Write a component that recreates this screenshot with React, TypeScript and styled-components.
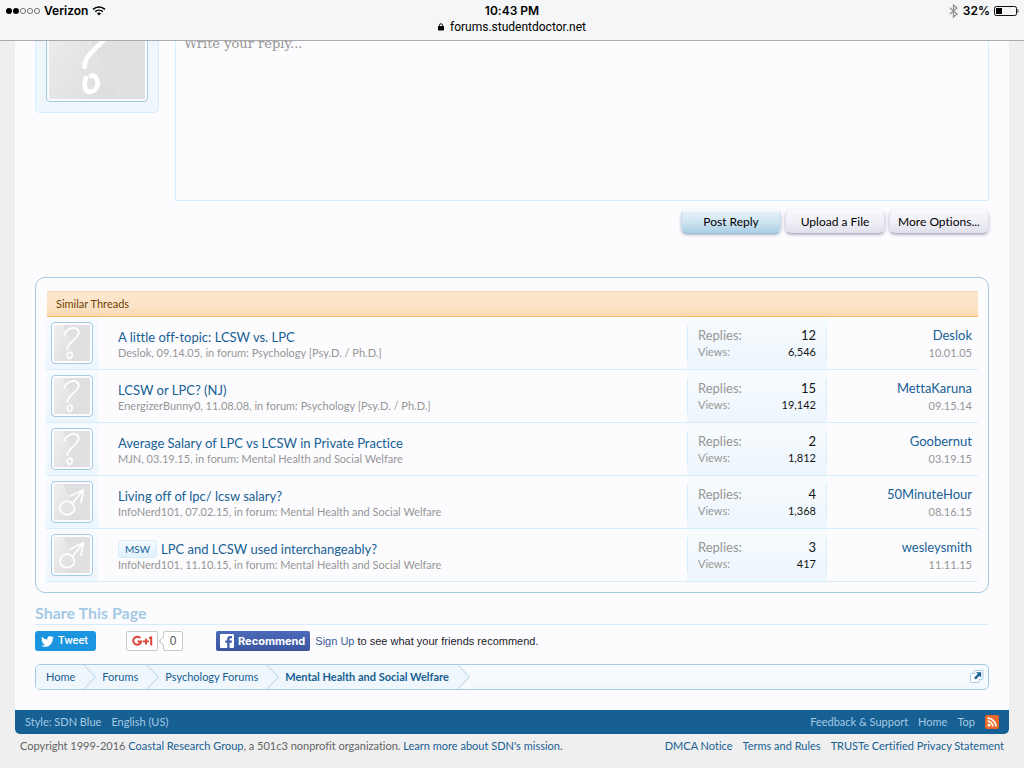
import React from 'react';
import styled, { createGlobalStyle } from 'styled-components';

const GlobalStyle = createGlobalStyle`
  *, *::before, *::after { box-sizing: border-box; }
  body {
    margin: 0;
    background: #efefef;
    font-family: Lato, "Open Sans", sans-serif;
    font-size: 11px;
    line-height: 16px;
    font-variant-ligatures: none;
    color: #141414;
  }
  a { color: #176093; text-decoration: none; }
  button, textarea { font: inherit; color: inherit; }
`;

/* ---------- browser status bar ---------- */

const StatusBar = styled.header`
  position: fixed;
  inset: 0 0 auto 0;
  z-index: 10;
  height: 41px;
  display: grid;
  grid-template-columns: 1fr auto 1fr;
  background: #f5f6f7;
  border-bottom: 1px solid #a9aaab;
  color: #000;
  font-family: Inter, Roboto, sans-serif;
  font-size: 12px;
  line-height: 16px;
  padding: 3px 5px;
`;

const StatusSide = styled.div<{ $end?: boolean }>`
  display: flex;
  height: 16px;
  align-items: center;
  justify-content: ${(p) => (p.$end ? 'flex-end' : 'flex-start')};
  gap: 4px;
  font-weight: 600;
`;

const StatusCenter = styled.div`
  display: flex;
  flex-direction: column;
  align-items: center;
  strong { font-weight: 600; }
`;

const Address = styled.span`
  display: flex;
  align-items: center;
  gap: 6px;
  font-family: Roboto, sans-serif;
`;

/* ---------- page ---------- */

const Content = styled.main`
  margin: 0 15px;
  padding: 0 20px 20px;
  background: #fcfcff;
`;

const ReplyArea = styled.form`
  display: flex;
  gap: 16px;
`;

const AvatarPanel = styled.div`
  align-self: flex-start;
  padding: 0 10px 10px;
  background: #f0f7fc;
  border: 1px solid #d7edfc;
  border-top: 0;
  border-radius: 0 0 5px 5px;
`;

const AvatarFrame = styled.span<{ $size: number }>`
  display: block;
  width: ${(p) => p.$size}px;
  height: ${(p) => p.$size}px;
  padding: 2px;
  background: #fcfcff;
  border: 1px solid #a5cae4;
  border-radius: 4px;
  svg { display: block; width: 100%; height: 100%; }
`;

const ReplyColumn = styled.div`
  flex: 1;
  display: flex;
  flex-direction: column;
`;

const ReplyBox = styled.textarea`
  display: block;
  width: 100%;
  height: 201px;
  padding: 34px 8px 8px;
  resize: none;
  outline: 0;
  background: #fcfcff;
  border: 1px solid #d7edfc;
  border-radius: 0;
  font-family: "DejaVu Serif", serif;
  font-size: 13px;
  line-height: 18px;
  &::placeholder { color: #969696; opacity: 1; }
`;

const ButtonRow = styled.div`
  display: flex;
  justify-content: flex-end;
  gap: 4px;
  padding-top: 9px;
`;

const Button = styled.button<{ $primary?: boolean }>`
  width: 100px;
  height: 24px;
  padding: 0;
  white-space: nowrap;
  font-size: 12px;
  line-height: 22px;
  color: #000;
  border: 1px solid ${(p) => (p.$primary ? '#c5dcec' : '#dfdfec')};
  border-top-color: #fff;
  border-bottom-color: ${(p) => (p.$primary ? '#9dbdd3' : '#b9b9c8')};
  border-radius: 6px;
  background: ${(p) =>
    p.$primary
      ? 'linear-gradient(#e8f3fa, #cfe4f1 50%, #a9cfe6)'
      : 'linear-gradient(#f8f8fc, #efeff6 50%, #e0e0ec)'};
  box-shadow: 0 1px 3px rgba(90, 90, 120, 0.45);
`;

/* ---------- similar threads ---------- */

const ThreadsBox = styled.section`
  margin-top: 43px;
  padding: 13px 10px 10px;
  border: 1px solid #a5cae4;
  border-radius: 10px;
`;

const ThreadsHeading = styled.h2`
  margin: 0 0 0 1px;
  height: 26px;
  padding: 0 9px;
  font-size: 11px;
  font-weight: 400;
  line-height: 24px;
  color: #6d3f03;
  background: linear-gradient(#fce8cf, #fbe3c6 60%, #f9d9b0);
  border-top: 1px solid #f9d9b0;
  border-bottom: 1px solid #f9bc6d;
`;

const ThreadTable = styled.table`
  width: 100%;
  border-collapse: separate;
  border-spacing: 0;
  table-layout: fixed;
`;

const ThreadRow = styled.tr`
  td {
    height: 53px;
    padding: 0;
    border-bottom: 1px solid #d7edfc;
  }
`;

const AvatarCell = styled.td`
  background: linear-gradient(#f7fbfd, #edf6fd);
  ${AvatarFrame} { margin-left: 5px; }
`;

const TitleCell = styled.td`
  && { padding-left: 20px; }
`;

const ThreadTitle = styled.h3`
  display: flex;
  align-items: center;
  gap: 4px;
  margin: 0;
  height: 19px;
  font-size: 13px;
  font-weight: 400;
  line-height: 19px;
  white-space: nowrap;
`;

const Prefix = styled.span`
  padding: 0 6px;
  font-size: 10px;
  line-height: 16px;
  color: #176093;
  background: linear-gradient(#f5fbfe, #e2f1fb);
  border: 1px solid #d7edfc;
  border-radius: 3px;
`;

const Meta = styled.p`
  margin: 0;
  line-height: 12px;
  color: #969696;
  white-space: nowrap;
`;

const StatsCell = styled.td`
  background: linear-gradient(#f7fbfd, #edf6fd);
`;

const Stats = styled.dl`
  margin: 0;
  padding: 1px 10px;
  border: solid #d7edfc;
  border-width: 0 1px;
`;

const Stat = styled.div<{ $major?: boolean }>`
  display: flex;
  justify-content: space-between;
  font-size: ${(p) => (p.$major ? '13px' : '11px')};
  line-height: ${(p) => (p.$major ? '17px' : '15px')};
  dt { color: #969696; }
  dd { margin: 0; color: #141414; }
`;

const LastCell = styled.td`
  text-align: right;
  && { padding: 2px 6px 0 0; }
  a { display: block; font-size: 13px; line-height: 17px; }
  time { display: block; line-height: 17px; color: #969696; }
`;

/* ---------- share ---------- */

const ShareHeading = styled.h2`
  margin: 10px 0 0;
  padding-bottom: 1px;
  font-size: 16px;
  font-weight: 700;
  line-height: 20px;
  color: #a5cae4;
  border-bottom: 1px solid #d7edfc;
`;

const ShareRow = styled.div`
  display: flex;
  align-items: center;
  height: 20px;
  margin-top: 6px;
  font-family: "Liberation Sans", Arial, sans-serif;
`;

const TweetButton = styled.button`
  display: flex;
  align-items: center;
  gap: 4px;
  height: 20px;
  padding: 0 8px 0 6px;
  border: 0;
  border-radius: 3px;
  background: #1b95e0;
  color: #fff;
  font-size: 11px;
  font-weight: 500;
  font-family: Roboto, sans-serif;
`;

const PlusOne = styled.button`
  margin-left: 30px;
  width: 32px;
  height: 20px;
  padding: 0;
  display: grid;
  place-items: center;
  background: #fff;
  border: 1px solid #c9c9c9;
  border-radius: 2px;
`;

const CountBubble = styled.span`
  position: relative;
  margin-left: 5px;
  width: 20px;
  height: 20px;
  background: #fff;
  border: 1px solid #c9c9c9;
  border-radius: 2px;
  text-align: center;
  font-size: 12px;
  line-height: 18px;
  color: #555;
  &::before {
    content: "";
    position: absolute;
    left: -4px;
    top: 6px;
    width: 6px;
    height: 6px;
    background: #fff;
    border: solid #c9c9c9;
    border-width: 0 0 1px 1px;
    transform: rotate(45deg);
  }
`;

const RecommendButton = styled.button`
  display: flex;
  align-items: center;
  gap: 4px;
  height: 20px;
  margin: 0 5px 0 33px;
  padding: 0 5px 0 4px;
  border: 0;
  border-radius: 2px;
  background: linear-gradient(#4c69ba, #3b55a0);
  color: #fff;
  font-size: 11px;
  font-weight: 700;
  font-family: Inter, Roboto, sans-serif;
`;

const ShareNote = styled.p`
  margin: 0;
  white-space: nowrap;
  color: #1d2129;
  a { color: #3b5998; }
`;

/* ---------- breadcrumb ---------- */

const Breadcrumb = styled.nav`
  display: flex;
  align-items: center;
  height: 26px;
  margin-top: 13px;
  border: 1px solid #a5cae4;
  border-radius: 5px;
  overflow: hidden;
  background: linear-gradient(#f7fbfe, #f7fbfe 50%, #f0f7fc);
`;

const Crumb = styled.span<{ $current?: boolean; $first?: boolean }>`
  display: flex;
  height: 24px;
  background: #f0f7fc;
  a {
    padding: 0 9px 0 ${(p) => (p.$first ? '10px' : '6px')};
    line-height: 24px;
    white-space: nowrap;
    font-weight: ${(p) => (p.$current ? 700 : 400)};
  }
  svg { display: block; background: ${(p) => (p.$current ? '#f7fbfe' : '#f0f7fc')}; }
`;

const JumpButton = styled.button`
  margin-left: auto;
  margin-right: 3px;
  padding: 0;
  width: 15px;
  height: 14px;
  border: 0;
  background: none;
  svg { display: block; }
`;

/* ---------- footer ---------- */

const FooterBar = styled.nav`
  display: flex;
  justify-content: space-between;
  align-items: center;
  height: 24px;
  margin: 0 15px;
  padding: 0 10px;
  background: #176093;
  border-radius: 0 0 5px 5px;
  a { color: #a5cae4; }
`;

const LinkGroup = styled.div`
  display: flex;
  align-items: center;
  gap: 10px;
  white-space: nowrap;
  svg { display: block; }
`;

const Legal = styled.footer`
  display: flex;
  justify-content: space-between;
  padding: 4px 20px;
  color: #646464;
  white-space: nowrap;
  p { margin: 0; }
`;

/* ---------- drawings ---------- */

type AvatarKind = 'unknown' | 'male';

const Avatar = ({ kind, size, id }: { kind: AvatarKind; size: number; id: string }) => (
  <AvatarFrame $size={size}>
    <svg viewBox="0 0 96 96" aria-hidden="true">
      <defs>
        <linearGradient id={id} x1="0" y1="0" x2="1" y2="1">
          <stop offset="0" stopColor="#efeff0" />
          <stop offset="1" stopColor="#dcdcde" />
        </linearGradient>
      </defs>
      <rect width="96" height="96" fill="#e0e0e2" />
      <path d="M0 0H24L69 96H0Z" fill={`url(#${id})`} />
      <g fill="none" stroke="#fff" strokeWidth="4.6" strokeLinecap="round" strokeLinejoin="round">
        {kind === 'unknown' ? (
          <>
            <path d="M28 26C32 12 49 4 60 10C71 17 66 27 55 37C47 45 35 54 35.500 64" />
            <path d="M37 75C34 82 36 89 41 89C47 88 50 82 48 77C47 73 44 72 42 73" />
          </>
        ) : (
          <>
            <path d="M33 46C13 47 9 78 31 81C50 84 60 68 51 55C47 49 40 45 33 46Z" />
            <path d="M49 52L78 16M43 32C55 27 67 21 78 16C77 28 75 38 72 49" />
          </>
        )}
      </g>
    </svg>
  </AvatarFrame>
);

const Signal = () => (
  <svg width="35" height="8" viewBox="0 0 35 8" role="img" aria-label="Signal strength">
    <circle cx="4" cy="4" r="3" />
    <circle cx="11" cy="4" r="3" />
    {[18, 25, 32].map((x) => (
      <circle key={x} cx={x} cy="4" r="2.6" fill="none" stroke="#444" strokeWidth=".7" />
    ))}
  </svg>
);

const Wifi = () => (
  <svg width="14" height="10" viewBox="0 0 14 10" aria-hidden="true">
    <path d="M1 3.4C4.5 .2 9.5 .2 13 3.4M3.2 5.7C5.4 3.7 8.6 3.7 10.8 5.7" fill="none" stroke="#000" strokeWidth="1.6" />
    <path d="M4.9 7.3C6.2 6.3 7.8 6.3 9.1 7.3L7 9.6Z" />
  </svg>
);

const Bluetooth = () => (
  <svg width="10" height="14" viewBox="0 0 10 14" aria-hidden="true">
    <path d="M.8 3.8L8 10L4.5 13V1L8 4L.8 10.2" fill="none" stroke="#929394" strokeWidth="1.3" />
  </svg>
);

const Battery = () => (
  <svg width="25" height="10" viewBox="0 0 25 10" aria-hidden="true">
    <rect x=".5" y=".5" width="22" height="9" rx="1.8" fill="none" stroke="#111" />
    <rect x="2" y="2" width="6" height="6" />
    <path d="M23.6 3H24Q25 5 24 7H23.6Z" />
  </svg>
);

const Lock = () => (
  <svg width="6" height="8" viewBox="0 0 6 8" aria-hidden="true">
    <rect x="0" y="3" width="6" height="4.4" rx=".6" />
    <path d="M1.4 3.4V2.2C1.4 .3 4.6 .3 4.6 2.2V3.4" fill="none" stroke="#000" strokeWidth=".9" />
  </svg>
);

const Bird = () => (
  <svg width="13" height="11" viewBox="0 0 24 20" aria-hidden="true">
    <path
      fill="#fff"
      d="M24 2.4c-.9.4-1.8.7-2.8.8 1-.6 1.8-1.6 2.2-2.7-1 .6-2 1-3.1 1.2A4.9 4.9 0 0 0 11.9 6.200C7.800 6 4.200 4 1.700 1c-1.300 2.200-.7 5.100 1.500 6.600-.8 0-1.600-.2-2.200-.6 0 2.300 1.600 4.400 3.900 4.900-.7.200-1.500.2-2.200.1.600 2 2.400 3.400 4.600 3.400A9.900 9.900 0 0 1 0 17.500 13.900 13.900 0 0 0 7.500 19.700c9.100 0 14.300-7.700 14-14.600 1-.7 1.800-1.600 2.500-2.700z"
    />
  </svg>
);

const PlusOneMark = () => (
  <svg width="21" height="12" viewBox="0 0 21 12" aria-hidden="true" fill="none" stroke="#db4437">
    <path strokeWidth="2" d="M8.300 3.100A4 4 0 1 0 9.200 6.400H5.500" />
    <path strokeWidth="1.800" d="M11 6.400H17M14 3.400V9.400" />
    <path strokeWidth="2" d="M17.200 3.200L19.200 2.400V10.600" />
  </svg>
);

const FacebookMark = () => (
  <svg width="14" height="14" viewBox="0 0 14 14" aria-hidden="true">
    <rect width="14" height="14" rx="1" fill="#fff" />
    <path fill="#4560ad" d="M7.200 14V8.800H5.300V6.600H7.200V5C7.200 3 8.300 2 10.200 2H12V4.200H10.800C9.900 4.200 9.600 4.600 9.600 5.300V6.600H12L11.700 8.800H9.600V14Z" />
  </svg>
);

const Chevron = () => (
  <svg width="12" height="24" viewBox="0 0 12 24" aria-hidden="true">
    <path d="M0 0L11.500 12L0 24Z" fill="#f0f7fc" />
    <path d="M0 0L11.500 12L0 24" fill="none" stroke="#c3dff0" strokeWidth="1.200" />
  </svg>
);

const Jump = () => (
  <svg width="15" height="14" viewBox="0 0 15 14" aria-hidden="true">
    <path d="M4 3.500V1.500Q4 .5 5 .5H12Q13 .5 13 1.500V8.500Q13 9.500 12 9.500H10" fill="#fff" stroke="#a5cae4" />
    <path d="M5 3.500H1.500Q.5 3.500 .5 4.500V11.500Q.5 12.500 1.500 12.500H8Q9.500 12.500 9.500 11.500V9" fill="#fff" stroke="#a5cae4" />
    <path d="M6 2.300H11.200V7.500L9.500 5.800L5.800 9.500L4.100 7.800L7.800 4.100Z" fill="#176093" />
  </svg>
);

const Rss = () => (
  <svg width="14" height="14" viewBox="0 0 14 14" role="img" aria-label="RSS">
    <rect width="14" height="14" rx="2" fill="#e05a26" />
    <rect x=".5" y=".5" width="13" height="13" rx="1.500" fill="#ee6a28" />
    <circle cx="4" cy="10" r="1.500" fill="#fff" />
    <path d="M2.500 6.200A5.300 5.300 0 0 1 7.800 11.500M2.500 3.100A8.400 8.400 0 0 1 10.900 11.500" fill="none" stroke="#fff" strokeWidth="1.700" />
  </svg>
);

/* ---------- data ---------- */

interface Thread {
  title: string;
  prefix?: string;
  author: string;
  date: string;
  forum: string;
  replies: string;
  views: string;
  lastUser: string;
  lastDate: string;
  avatar: AvatarKind;
}

const threads: Thread[] = [
  { title: 'A little off-topic: LCSW vs. LPC', author: 'Deslok', date: '09.14.05', forum: 'Psychology [Psy.D. / Ph.D.]', replies: '12', views: '6,546', lastUser: 'Deslok', lastDate: '10.01.05', avatar: 'unknown' },
  { title: 'LCSW or LPC? (NJ)', author: 'EnergizerBunny0', date: '11.08.08', forum: 'Psychology [Psy.D. / Ph.D.]', replies: '15', views: '19,142', lastUser: 'MettaKaruna', lastDate: '09.15.14', avatar: 'unknown' },
  { title: 'Average Salary of LPC vs LCSW in Private Practice', author: 'MJN', date: '03.19.15', forum: 'Mental Health and Social Welfare', replies: '2', views: '1,812', lastUser: 'Goobernut', lastDate: '03.19.15', avatar: 'unknown' },
  { title: 'Living off of lpc/ lcsw salary?', author: 'InfoNerd101', date: '07.02.15', forum: 'Mental Health and Social Welfare', replies: '4', views: '1,368', lastUser: '50MinuteHour', lastDate: '08.16.15', avatar: 'male' },
  { title: 'LPC and LCSW used interchangeably?', prefix: 'MSW', author: 'InfoNerd101', date: '11.10.15', forum: 'Mental Health and Social Welfare', replies: '3', views: '417', lastUser: 'wesleysmith', lastDate: '11.11.15', avatar: 'male' },
];

const crumbs = ['Home', 'Forums', 'Psychology Forums', 'Mental Health and Social Welfare'];

export default function App() {
  return (
    <>
      <GlobalStyle />
      <StatusBar>
        <StatusSide>
          <Signal />
          <span>Verizon</span>
          <Wifi />
        </StatusSide>
        <StatusCenter>
          <strong>10:43 PM</strong>
          <Address>
            <Lock />
            forums.studentdoctor.net
          </Address>
        </StatusCenter>
        <StatusSide $end>
          <Bluetooth />
          <span>32%</span>
          <Battery />
        </StatusSide>
      </StatusBar>

      <Content>
        <ReplyArea onSubmit={(e) => e.preventDefault()}>
          <AvatarPanel>
            <Avatar kind="unknown" size={102} id="own-avatar" />
          </AvatarPanel>
          <ReplyColumn>
            <ReplyBox aria-label="Write your reply" placeholder="Write your reply..." />
            <ButtonRow>
              <Button $primary type="submit">Post Reply</Button>
              <Button type="button">Upload a File</Button>
              <Button type="button">More Options...</Button>
            </ButtonRow>
          </ReplyColumn>
        </ReplyArea>

        <ThreadsBox>
          <ThreadsHeading>Similar Threads</ThreadsHeading>
          <ThreadTable>
            <colgroup>
              <col width="52" />
              <col />
              <col width="140" />
              <col width="151" />
            </colgroup>
            <tbody>
              {threads.map((t, i) => (
                <ThreadRow key={t.title}>
                  <AvatarCell>
                    <Avatar kind={t.avatar} size={42} id={`avatar-${i}`} />
                  </AvatarCell>
                  <TitleCell>
                    <ThreadTitle>
                      {t.prefix && <Prefix>{t.prefix}</Prefix>}
                      <a href="#thread">{t.title}</a>
                    </ThreadTitle>
                    <Meta>{`${t.author}, ${t.date}, in forum: ${t.forum}`}</Meta>
                  </TitleCell>
                  <StatsCell>
                    <Stats>
                      <Stat $major>
                        <dt>Replies:</dt>
                        <dd>{t.replies}</dd>
                      </Stat>
                      <Stat>
                        <dt>Views:</dt>
                        <dd>{t.views}</dd>
                      </Stat>
                    </Stats>
                  </StatsCell>
                  <LastCell>
                    <a href="#member">{t.lastUser}</a>
                    <time>{t.lastDate}</time>
                  </LastCell>
                </ThreadRow>
              ))}
            </tbody>
          </ThreadTable>
        </ThreadsBox>

        <ShareHeading>Share This Page</ShareHeading>
        <ShareRow>
          <TweetButton type="button">
            <Bird />
            Tweet
          </TweetButton>
          <PlusOne type="button" aria-label="Google plus one">
            <PlusOneMark />
          </PlusOne>
          <CountBubble>0</CountBubble>
          <RecommendButton type="button">
            <FacebookMark />
            Recommend
          </RecommendButton>
          <ShareNote>
            <a href="#signup">Sign Up</a> to see what your friends recommend.
          </ShareNote>
        </ShareRow>

        <Breadcrumb aria-label="Breadcrumb">
          {crumbs.map((c, i) => (
            <Crumb key={c} $first={i === 0} $current={i === crumbs.length - 1}>
              <a href="#crumb">{c}</a>
              <Chevron />
            </Crumb>
          ))}
          <JumpButton type="button" aria-label="Open quick navigation">
            <Jump />
          </JumpButton>
        </Breadcrumb>
      </Content>

      <FooterBar aria-label="Footer">
        <LinkGroup>
          <a href="#style">Style: SDN Blue</a>
          <a href="#language">English (US)</a>
        </LinkGroup>
        <LinkGroup>
          <a href="#support">Feedback &amp; Support</a>
          <a href="#home">Home</a>
          <a href="#top">Top</a>
          <a href="#rss"><Rss /></a>
        </LinkGroup>
      </FooterBar>
      <Legal>
        <p>
          Copyright 1999-2016 <a href="#group">Coastal Research Group</a>, a 501c3 nonprofit organization.{' '}
          <a href="#mission">Learn more about SDN's mission.</a>
        </p>
        <LinkGroup>
          <a href="#dmca">DMCA Notice</a>
          <a href="#terms">Terms and Rules</a>
          <a href="#privacy">TRUSTe Certified Privacy Statement</a>
        </LinkGroup>
      </Legal>
    </>
  );
}
